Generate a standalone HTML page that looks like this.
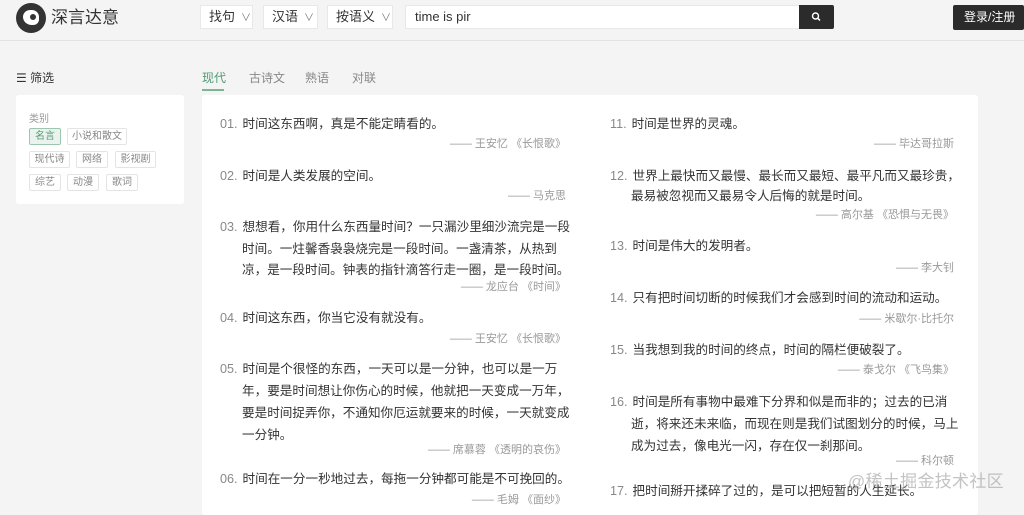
<!DOCTYPE html>
<html><head><meta charset="utf-8"><style>
*{margin:0;padding:0;box-sizing:border-box}
body{width:1024px;height:503px;overflow:hidden;background:#f4f4f4;font-family:"Liberation Sans","Noto Sans CJK SC",sans-serif;color:#333;position:relative}
.a{position:absolute;white-space:nowrap}
.hdr{position:absolute;left:0;top:0;width:1024px;height:41px;background:#f4f4f4;border-bottom:1px solid #e2e2e2}
.sel{position:absolute;top:5px;height:24px;background:#fff;border:1px solid #e8e8e8;font-size:13px;line-height:22px;padding-left:8px;color:#333}
.sel i{font-style:normal;color:#777;font-size:10px;margin-left:6px}
.tag{position:absolute;height:17px;border:1px solid #e4e4e4;border-radius:2px;font-size:10px;line-height:15px;color:#888;text-align:center;background:#fff}
.t{position:absolute;font-size:12.6px;color:#333;white-space:nowrap;line-height:16px}
.t b{font-weight:normal;color:#888;margin-right:5px}
.au{position:absolute;font-size:11px;color:#999;white-space:nowrap;text-align:right;line-height:14px}
</style></head><body>
<div class="hdr"></div>
<div class="a" style="left:16px;top:3px;width:30px;height:30px;border-radius:50%;background:#333"></div>
<div class="a" style="left:23px;top:10px;width:16px;height:15px;border-radius:50% 50% 40% 60%;background:#fff"></div>
<div class="a" style="left:30px;top:14px;width:6px;height:6px;border-radius:50%;background:#333"></div>
<div class="a" style="left:51px;top:7px;font-size:17px;color:#333;line-height:22px">深言达意</div>
<div class="sel" style="left:200px;width:53px">找句<i>∨</i></div>
<div class="sel" style="left:263px;width:55px">汉语<i>∨</i></div>
<div class="sel" style="left:327px;width:66px">按语义<i>∨</i></div>
<div class="sel" style="left:405px;width:395px;padding-left:9px">time is pir</div>
<div class="a" style="left:799px;top:5px;width:35px;height:24px;background:#2b2b2b;border-radius:0 2px 2px 0">
<svg width="35" height="24" viewBox="0 0 35 24"><circle cx="16.5" cy="11" r="3" fill="none" stroke="#fff" stroke-width="1.4"/><line x1="18.7" y1="13.2" x2="21" y2="15.5" stroke="#fff" stroke-width="1.5"/></svg></div>
<div class="a" style="left:953px;top:5px;width:71px;height:25px;background:#2b2b2b;border-radius:2px;color:#fff;font-size:12px;line-height:25px;padding-left:11px">登录/注册</div>

<div class="a" style="left:16px;top:69px;font-size:12px;color:#333">☰ 筛选</div>
<div class="a" style="left:16px;top:95px;width:168px;height:109px;background:#fff;border-radius:3px"></div>
<div class="a" style="left:29px;top:110px;font-size:10px;color:#999">类别</div>
<div class="tag" style="left:29px;top:128px;width:32px;background:#eaf3ee;border-color:#9cc7ae;color:#5a9a76">名言</div>
<div class="tag" style="left:67px;top:128px;width:60px">小说和散文</div>
<div class="tag" style="left:29px;top:151px;width:41px">现代诗</div>
<div class="tag" style="left:76px;top:151px;width:32px">网络</div>
<div class="tag" style="left:115px;top:151px;width:41px">影视剧</div>
<div class="tag" style="left:29px;top:174px;width:32px">综艺</div>
<div class="tag" style="left:67px;top:174px;width:32px">动漫</div>
<div class="tag" style="left:106px;top:174px;width:32px">歌词</div>

<div class="a" style="left:202px;top:69px;font-size:12px;color:#4f9a72">现代</div>
<div class="a" style="left:202px;top:89px;width:22px;height:2px;background:#7cb592"></div>
<div class="a" style="left:249px;top:69px;font-size:12px;color:#888">古诗文</div>
<div class="a" style="left:305px;top:69px;font-size:12px;color:#888">熟语</div>
<div class="a" style="left:352px;top:69px;font-size:12px;color:#888">对联</div>

<div class="a" style="left:202px;top:95px;width:776px;height:420px;background:#fff;border-radius:3px"></div>

<div class="t" style="left:220px;top:116px"><b>01.</b>时间这东西啊，真是不能定睛看的。</div>
<div class="au" style="right:458px;top:137px">—— 王安忆 《长恨歌》</div>
<div class="t" style="left:220px;top:168px"><b>02.</b>时间是人类发展的空间。</div>
<div class="au" style="right:458px;top:189px">—— 马克思</div>
<div class="t" style="left:220px;top:219px"><b>03.</b>想想看，你用什么东西量时间？一只漏沙里细沙流完是一段</div>
<div class="t" style="left:242px;top:241px">时间。一炷馨香袅袅烧完是一段时间。一盏清茶，从热到</div>
<div class="t" style="left:242px;top:262px">凉，是一段时间。钟表的指针滴答行走一圈，是一段时间。</div>
<div class="au" style="right:458px;top:280px">—— 龙应台 《时间》</div>
<div class="t" style="left:220px;top:310px"><b>04.</b>时间这东西，你当它没有就没有。</div>
<div class="au" style="right:458px;top:332px">—— 王安忆 《长恨歌》</div>
<div class="t" style="left:220px;top:361px"><b>05.</b>时间是个很怪的东西，一天可以是一分钟，也可以是一万</div>
<div class="t" style="left:242px;top:383px">年，要是时间想让你伤心的时候，他就把一天变成一万年，</div>
<div class="t" style="left:242px;top:405px">要是时间捉弄你，不通知你厄运就要来的时候，一天就变成</div>
<div class="t" style="left:242px;top:427px">一分钟。</div>
<div class="au" style="right:458px;top:443px">—— 席慕蓉 《透明的哀伤》</div>
<div class="t" style="left:220px;top:471px"><b>06.</b>时间在一分一秒地过去，每拖一分钟都可能是不可挽回的。</div>
<div class="au" style="right:458px;top:493px">—— 毛姆 《面纱》</div>

<div class="t" style="left:610px;top:116px"><b>11.</b>时间是世界的灵魂。</div>
<div class="au" style="right:70px;top:137px">—— 毕达哥拉斯</div>
<div class="t" style="left:610px;top:168px"><b>12.</b>世界上最快而又最慢、最长而又最短、最平凡而又最珍贵，</div>
<div class="t" style="left:631px;top:188px">最易被忽视而又最易令人后悔的就是时间。</div>
<div class="au" style="right:70px;top:208px">—— 高尔基 《恐惧与无畏》</div>
<div class="t" style="left:610px;top:238px"><b>13.</b>时间是伟大的发明者。</div>
<div class="au" style="right:70px;top:261px">—— 李大钊</div>
<div class="t" style="left:610px;top:290px"><b>14.</b>只有把时间切断的时候我们才会感到时间的流动和运动。</div>
<div class="au" style="right:70px;top:312px">—— 米歇尔·比托尔</div>
<div class="t" style="left:610px;top:342px"><b>15.</b>当我想到我的时间的终点，时间的隔栏便破裂了。</div>
<div class="au" style="right:70px;top:363px">—— 泰戈尔 《飞鸟集》</div>
<div class="t" style="left:610px;top:394px"><b>16.</b>时间是所有事物中最难下分界和似是而非的；过去的已消</div>
<div class="t" style="left:631px;top:416px">逝，将来还未来临，而现在则是我们试图划分的时候，马上</div>
<div class="t" style="left:631px;top:438px">成为过去，像电光一闪，存在仅一刹那间。</div>
<div class="au" style="right:70px;top:454px">—— 科尔顿</div>
<div class="t" style="left:610px;top:483px"><b>17.</b>把时间掰开揉碎了过的，是可以把短暂的人生延长。</div>
<div class="a" style="left:848px;top:467px;font-size:17px;color:rgba(170,170,170,0.7);letter-spacing:0.3px">@稀土掘金技术社区</div>
</body></html>
